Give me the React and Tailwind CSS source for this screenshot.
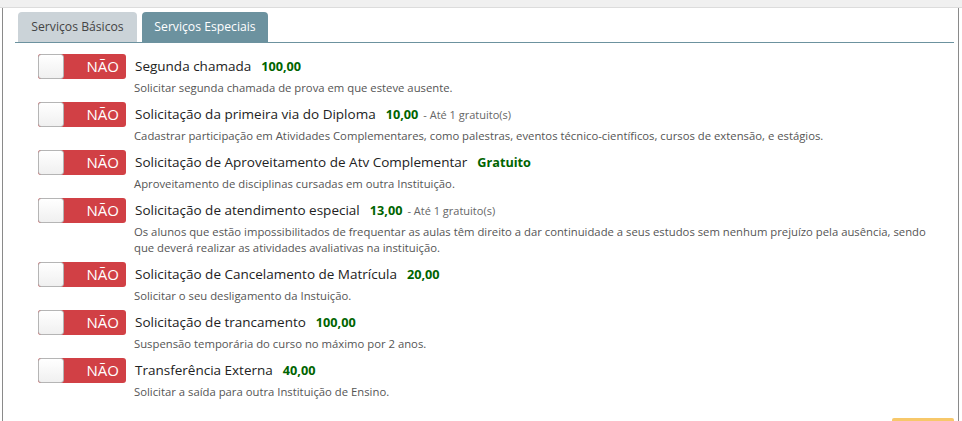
import React from 'react';

const servicos = [
  {
    titulo: 'Segunda chamada',
    valor: '100,00',
    descricao: 'Solicitar segunda chamada de prova em que esteve ausente.',
  },
  {
    titulo: 'Solicitação da primeira via do Diploma',
    valor: '10,00',
    extra: '- Até 1 gratuito(s)',
    descricao:
      'Cadastrar participação em Atividades Complementares, como palestras, eventos técnico-científicos, cursos de extensão, e estágios.',
  },
  {
    titulo: 'Solicitação de Aproveitamento de Atv Complementar',
    valor: 'Gratuito',
    descricao: 'Aproveitamento de disciplinas cursadas em outra Instituição.',
  },
  {
    titulo: 'Solicitação de atendimento especial',
    valor: '13,00',
    extra: '- Até 1 gratuito(s)',
    descricao:
      'Os alunos que estão impossibilitados de frequentar as aulas têm direito a dar continuidade a seus estudos sem nenhum prejuízo pela ausência, sendo que deverá realizar as atividades avaliativas na instituição.',
  },
  {
    titulo: 'Solicitação de Cancelamento de Matrícula',
    valor: '20,00',
    descricao: 'Solicitar o seu desligamento da Instuição.',
  },
  {
    titulo: 'Solicitação de trancamento',
    valor: '100,00',
    descricao: 'Suspensão temporária do curso no máximo por 2 anos.',
  },
  {
    titulo: 'Transferência Externa',
    valor: '40,00',
    descricao: 'Solicitar a saída para outra Instituição de Ensino.',
  },
];

const Toggle = () => (
  <div className="relative h-[25px] w-[88px] shrink-0 rounded-[3px] bg-[#d14045]">
    <div className="absolute left-0 top-0 h-[25px] w-[26px] rounded-[3px] border border-[#b5b5b5] bg-gradient-to-b from-white to-[#f0f0f0]" />
    <span className="absolute right-[7px] top-0 text-[15px] leading-[25px] text-white">NÃO</span>
  </div>
);

export default function App() {
  return (
    <div
      className="relative h-[421px] w-[962px] overflow-hidden bg-white"
      style={{ fontFamily: '"Open Sans", "Noto Sans", sans-serif' }}
    >
      <div className="h-[8px] border-b border-[#dcdcdc] bg-[#f0f0f0]" />
      <div className="ml-[2px] h-full w-[957px] border-x border-[#8a8a8a] pl-[12px] pr-[4px] pt-[4px]">
        <div className="flex gap-[5px] border-b border-[#6c929f] pl-[3px]">
          <div className="flex h-[30px] w-[119px] items-center justify-center rounded-t-[4px] bg-[#cbd3d8] text-[12.2px] text-[#444]">
            Serviços Básicos
          </div>
          <div className="flex h-[30px] w-[126px] items-center justify-center rounded-t-[4px] bg-[#6c929f] text-[12.2px] text-white">
            Serviços Especiais
          </div>
        </div>

        <div className="pl-[23px] pt-[11px]">
          {servicos.map((s) => (
            <div key={s.titulo} className="flex pb-[6px]">
              <Toggle />
              <div className="ml-[8px] min-w-0 flex-1">
                <div className="flex h-[25px] items-baseline pl-[1px] leading-[25px]">
                  <span className="text-[13.5px] text-[#222]">{s.titulo}</span>
                  <span className="ml-[10px] text-[12.7px] font-bold text-[#006400]">{s.valor}</span>
                  {s.extra && (
                    <span className="ml-[5px] text-[11px] text-[#666]">{s.extra}</span>
                  )}
                </div>
                <p className="mt-[1px] pr-[8px] text-[11.3px] leading-[16px] text-[#555]">
                  {s.descricao}
                </p>
              </div>
            </div>
          ))}
        </div>
      </div>
      <div className="absolute left-[892px] top-[418px] h-[3px] w-[62px] rounded-t-[2px] bg-[#f7c86a]" />
    </div>
  );
}
